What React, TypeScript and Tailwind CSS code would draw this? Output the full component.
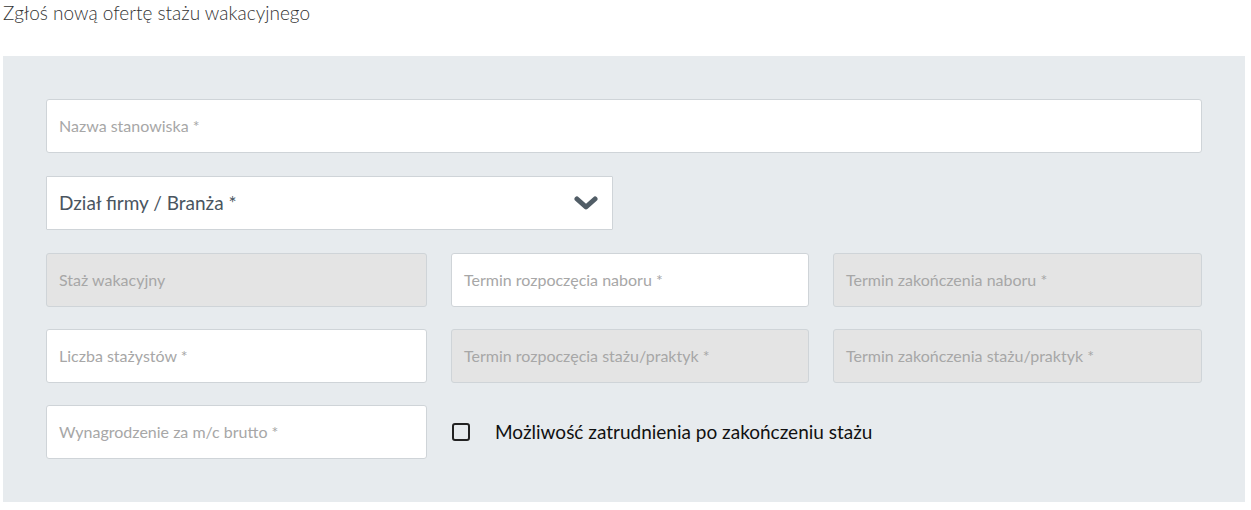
import React from "react";

const base = "h-[54px] rounded-[3px] border border-[#cfd4d8] px-[12px] flex items-center text-[16px] text-[#a7a7a7]";
const Field = ({ t, d }: { t: string; d?: boolean }) => (
  <div className={`${base} ${d ? "bg-[#e4e4e4]" : "bg-white"}`}>{t}</div>
);

export default function App() {
  return (
    <div className="w-[1251px] h-[510px] bg-white" style={{ fontFamily: "Lato, 'Open Sans', sans-serif" }}>
      <div className="pl-[3px] pt-[1px] h-[56px] text-[19px] text-[#333] leading-[24px] font-light">Zgłoś nową ofertę stażu wakacyjnego</div>
      <div className="ml-[3px] w-[1242px] h-[446px] bg-[#e7ebee] pt-[43px] pl-[43px]">
        <div className="w-[1156px] flex flex-col gap-[23px]">
          <Field t="Nazwa stanowiska *" />
          <div className="w-[567px] h-[54px] rounded-[1px] border border-[#cfd4d8] bg-white flex items-center justify-between pl-[12px] pr-[14px] text-[19px] text-[#4a5560]">
            <span>Dział firmy / Branża *</span>
            <svg width="24" height="16" viewBox="0 0 24 16"><path d="M3 4 L12 12 L21 4" stroke="#515d66" strokeWidth="5" fill="none" strokeLinejoin="round" strokeLinecap="round" /></svg>
          </div>
          <div className="grid grid-cols-[381px_358px_369px] gap-x-[24px] gap-y-[22px]">
            <Field t="Staż wakacyjny" d />
            <Field t="Termin rozpoczęcia naboru *" />
            <Field t="Termin zakończenia naboru *" d />
            <Field t="Liczba stażystów *" />
            <Field t="Termin rozpoczęcia stażu/praktyk *" d />
            <Field t="Termin zakończenia stażu/praktyk *" d />
            <Field t="Wynagrodzenie za m/c brutto *" />
            <div className="col-span-2 flex items-center">
              <div className="w-[18px] h-[18px] border-2 border-[#222] rounded-[3px] ml-[1px]" />
              <span className="ml-[25px] text-[19px] text-[#111]">Możliwość zatrudnienia po zakończeniu stażu</span>
            </div>
          </div>
        </div>
      </div>
    </div>
  );
}
